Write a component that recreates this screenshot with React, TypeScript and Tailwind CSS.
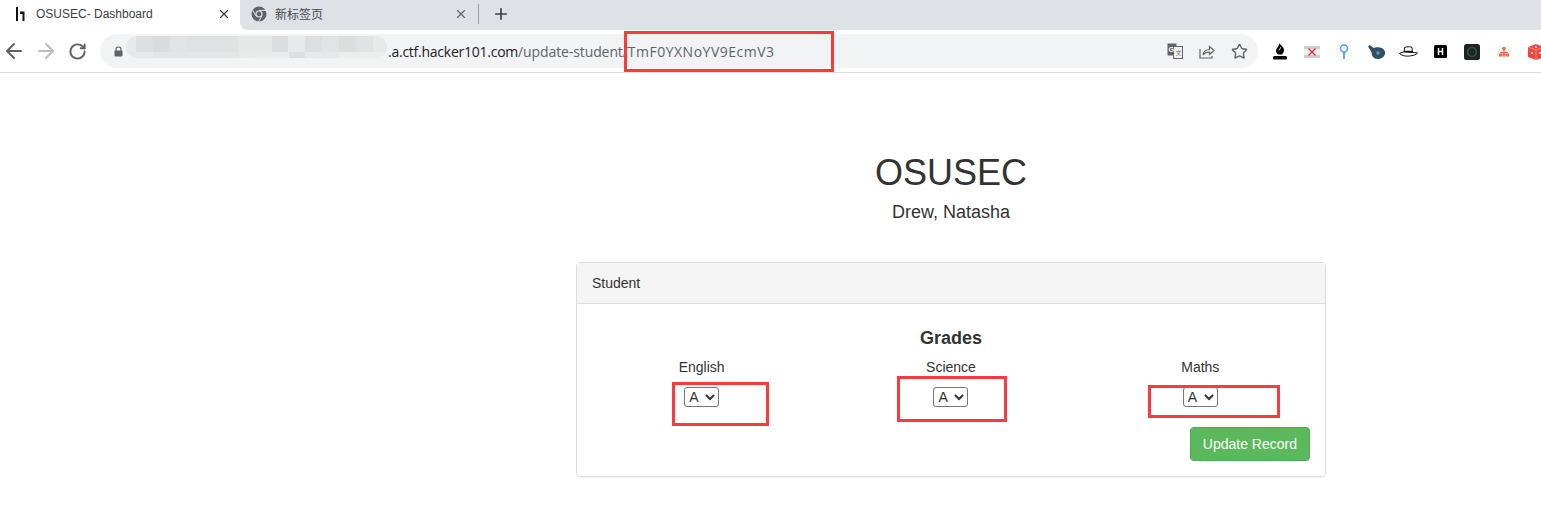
import React from 'react';
import { ArrowLeft, ArrowRight, RotateCw, X, Plus, Star } from 'lucide-react';

const font = "font-['Liberation_Sans',Arial,sans-serif]";
const chromeFont = "font-['Open_Sans',sans-serif]";

// pixelated redaction over the start of the url
const mosaicTop = [
  'w-[10px] bg-[#e8eaea]',
  'w-[17px] bg-[#dcdfe1]',
  'w-[17px] bg-[#d8dcdc]',
  'w-[17px] bg-[#e0e4e6]',
  'w-[35px] bg-[#dfe1e2]',
  'w-[16px] bg-[#dfe2df]',
  'w-[34px] bg-[#e6e8e8]',
  'w-[16px] bg-[#d9dde0]',
  'w-[17px] bg-[#e8e9ea]',
  'w-[17px] bg-[#dcdfe0]',
  'w-[17px] bg-[#e2e3e4]',
  'w-[17px] bg-[#dbdedd]',
  'w-[17px] bg-[#e0e2e3]',
  'w-[14px] bg-[#e8eaea]',
];

const mosaicBottom = [
  'w-[27px] bg-[#e6e9e9]',
  'w-[34px] bg-[#e2e5e5]',
  'w-[52px] bg-[#e4e6e7]',
  'w-[16px] bg-[#e8e9e9]',
  'w-[34px] bg-[#eaebeb]',
  'w-[16px] bg-[#dde0e3]',
  'w-[34px] bg-[#e7e8e9]',
  'w-[48px] bg-[#eceeee]',
];

const ChromeLogo = () => (
  <svg width="16" height="16" viewBox="0 0 16 16">
    <circle cx="8" cy="8" r="7.5" fill="#5f6368" />
    <circle cx="8" cy="8" r="3.6" fill="#dee1e6" />
    <circle cx="8" cy="8" r="2.4" fill="#5f6368" />
    <path d="M8 4.4h7M5 10l-3.5-6M10.8 10l-3.5 6" stroke="#dee1e6" strokeWidth="1" />
  </svg>
);

const HackerOneLogo = () => (
  <svg width="9" height="14" viewBox="0 0 9 14">
    <rect x="0" y="0" width="2" height="14" fill="#111" />
    <path d="M4 4.500h4.500V14h-2V7H4z" fill="#111" />
  </svg>
);

const LockIcon = () => (
  <svg width="9" height="11" viewBox="0 0 9 11">
    <path d="M2 5V3.200C2 1.800 3 1 4.500 1S7 1.800 7 3.200V5" fill="none" stroke="#5f6368" strokeWidth="1.200" />
    <rect x="0.500" y="4.500" width="8" height="6" rx="1" fill="#5f6368" />
  </svg>
);

const TranslateIcon = () => (
  <svg width="16" height="16" viewBox="0 0 16 16">
    <rect x="0.5" y="0.500" width="9" height="12" fill="#5f6368" />
    <rect x="6.500" y="3.500" width="9" height="12" fill="#f1f3f4" stroke="#5f6368" />
    <text x="1.500" y="9" fontSize="7" fontWeight="700" fill="#fff" fontFamily="Liberation Sans">G</text>
    <text x="8.500" y="12" fontSize="6" fill="#5f6368" fontFamily="Noto Sans CJK SC">文</text>
  </svg>
);

const ShareIcon = () => (
  <svg width="16" height="15" viewBox="0 0 16 15" fill="none" stroke="#5f6368" strokeWidth="1.200">
    <path d="M1 5v9h12v-2" />
    <path d="M4 11c.5-3.500 3-5.500 6.500-5.500V2.500L15 6.500l-4.500 4V8C8 8 5.500 9 4 11z" />
  </svg>
);

const extensions = [
  <svg key="bishop" width="16" height="17" viewBox="0 0 16 17">
    <path d="M7.500 0c.5 2 4.500 3.500 4.500 7 0 2-1 3-2 4.500H6C4.500 10 4 9 4 7.500 4 5.500 7 3.500 7.500 0z" fill="#000" />
    <path d="M9 4L7 7.500" stroke="#fff" strokeWidth="0.800" />
    <rect x="1" y="13" width="14" height="3.500" rx="1.500" fill="#000" />
  </svg>,
  <svg key="cross" width="16" height="12" viewBox="0 0 16 12">
    <rect width="16" height="12" fill="#cfcfcf" />
    <rect y="3" width="16" height="6" fill="#eeeeee" />
    <path d="M4.500 2.500l7 7M11.500 2.500l-7 7" stroke="#ee2244" strokeWidth="1.300" />
  </svg>,
  <svg key="pin" width="10" height="15" viewBox="0 0 10 15">
    <circle cx="5" cy="4.500" r="3.500" fill="none" stroke="#4f9ff5" strokeWidth="1.500" />
    <path d="M5 8v7" stroke="#4f9ff5" strokeWidth="1.800" />
  </svg>,
  <svg key="teapot" width="17" height="14" viewBox="0 0 17 14">
    <path d="M0 1.500 2 0l3.500 3c3-1.500 10.500-1 11.500 4 .5 4-3 7-7 7-4.500 0-6.500-3-6.500-7z" fill="#2c5068" />
    <circle cx="10" cy="8" r="1.800" fill="#6f8da0" />
  </svg>,
  <svg key="hat" width="19" height="12" viewBox="0 0 19 12">
    <path d="M5.500 1.500c2-1 6.500-1 7.500 0l.5 6h-8.500z" fill="#fff" stroke="#111" />
    <path d="M5 5.500h8.500" stroke="#111" strokeWidth="1.400" />
    <path d="M.5 7.500c2-1 3.500-1.500 5-1.500l8 .5c1.500 0 3 0 5 .5-2 3-14 5-18 .5z" fill="#fff" stroke="#111" />
  </svg>,
  <svg key="h" width="13" height="13" viewBox="0 0 13 13">
    <rect width="13" height="13" rx="1.500" fill="#000" />
    <path d="M4.500 3v7M8.500 3v7M4.500 6.500h4" stroke="#fff" strokeWidth="1.500" />
  </svg>,
  <svg key="ring" width="16" height="16" viewBox="0 0 16 16">
    <rect width="16" height="16" rx="2.500" fill="#1f2423" />
    <circle cx="8" cy="8" r="4.300" fill="none" stroke="#2f5f50" strokeWidth="1.300" />
  </svg>,
  <svg key="tree" width="14" height="14" viewBox="0 0 14 14">
    <rect width="14" height="14" rx="1.500" fill="#f7f7f7" />
    <g fill="#f2693c">
      <circle cx="7" cy="3.500" r="1.800" />
      <rect x="6.300" y="4" width="1.400" height="5" />
      <rect x="3" y="7" width="8" height="1.200" />
      <rect x="2" y="8.500" width="3" height="3" />
      <rect x="5.500" y="8.500" width="3" height="3" />
      <rect x="9" y="8.500" width="3" height="3" />
    </g>
  </svg>,
  <svg key="dice" width="16" height="16" viewBox="0 0 16 16">
    <path d="M8 0l8 3v10l-8 3-8-3V3z" fill="#f2473f" />
    <path d="M0 3l8 3 8-3M8 6v10" stroke="#ffb3ad" strokeWidth="0.600" fill="none" />
    <circle cx="4" cy="9" r="1" fill="#fff" />
    <circle cx="12" cy="9" r="1" fill="#fff" />
    <circle cx="8" cy="3" r="1" fill="#fff" />
  </svg>,
];

const Grade = ({ label }: { label: string }) => (
  <div className="flex flex-col items-center">
    <span className="text-[14px] leading-[20px] text-[#333]">{label}</span>
    <select defaultValue="A" className="mt-[10px] h-[20px] w-[35px] appearance-auto rounded-[3px] border border-[#767676] bg-white text-[14px] text-[#333]">
      <option>A</option>
      <option>B</option>
      <option>C</option>
    </select>
  </div>
);

const Highlight = ({ className }: { className: string }) => (
  <div className={`pointer-events-none absolute border-[3px] border-[#fb3a3a] ${className}`} />
);

export default function App() {
  return (
    <div className={`relative h-[505px] w-[1541px] overflow-hidden bg-white ${font}`}>
      {/* tab strip */}
      <div className="flex h-[30px] items-stretch text-[12px]">
        <div className={`flex w-[240px] items-center bg-white pb-[3px] pl-[16px] pr-[9px] text-[#3c4043] ${font}`}>
          <HackerOneLogo />
          <span className="ml-[11px] flex-1">OSUSEC- Dashboard</span>
          <X size={14} strokeWidth={2} color="#3c4043" />
        </div>
        <div className="flex flex-1 items-center rounded-bl-lg bg-[#dee1e6] pb-[3px]">
          <div className="flex w-[238px] items-center pl-[11px] pr-[10px] text-[#45494d]">
            <ChromeLogo />
            <span className="ml-[8px] flex-1 font-['Noto_Sans_CJK_SC',sans-serif]">新标签页</span>
            <X size={14} strokeWidth={2} color="#5f6368" />
          </div>
          <div className="h-[20px] w-px bg-[#9aa0a6]" />
          <Plus size={18} strokeWidth={2.2} color="#3c4043" className="ml-[13px]" />
        </div>
      </div>

      {/* toolbar */}
      <div className="flex h-[43px] items-center border-b border-[#dadce0] bg-white">
        <div className="flex w-[100px] items-center gap-[8px] pl-[2px]">
          <ArrowLeft size={24} color="#5f6368" strokeWidth={2} />
          <ArrowRight size={24} color="#babcbe" strokeWidth={2} />
          <RotateCw size={19} color="#5f6368" strokeWidth={2.500} className="ml-[2px]" />
        </div>
        <div className="relative flex h-[34px] w-[1158px] items-center rounded-full bg-[#f1f3f4] pl-[14px] pr-[10px]">
          <LockIcon />
          <span className={`ml-[265px] flex-1 text-[14px] text-[#5f6368] ${chromeFont}`}>
            <span className="tracking-[-0.25px] text-[#202124]">.a.ctf.hacker101.com</span>
            <span className="tracking-[-0.1px]">/update-student/</span>
            <span className="tracking-[0.5px]">TmF0YXNoYV9EcmV3</span>
          </span>
          <div className="flex items-center gap-[16px]">
            <TranslateIcon />
            <ShareIcon />
            <Star size={17} color="#5f6368" strokeWidth={2} />
          </div>
        </div>
        <div className="ml-[12px] flex flex-1 items-center gap-[12px] overflow-hidden pt-[1px]">
          {extensions.map((icon, i) => (
            <div key={i} className="flex h-[20px] w-[20px] shrink-0 items-center justify-center">
              {icon}
            </div>
          ))}
        </div>
      </div>

      {/* page */}
      <div className="ml-[576px] w-[750px] text-[#333]">
        <h1 className="mt-[78px] text-center text-[36px] leading-[44px]">OSUSEC</h1>
        <h4 className="mt-[7px] text-center text-[18px] leading-[20px]">Drew, Natasha</h4>
        <div className="mt-[40px] h-[215px] rounded-[4px] border border-[#dddddd] shadow-[0_1px_1px_rgba(0,0,0,0.05)]">
          <div className="flex h-[41px] items-center border-b border-[#dddddd] bg-[#f5f5f5] px-[15px] text-[14px]">Student</div>
          <div className="pt-[24px]">
            <h4 className="text-center text-[18px] font-bold leading-[20px]">Grades</h4>
            <div className="mt-[9px] grid grid-cols-3">
              <Grade label="English" />
              <Grade label="Science" />
              <Grade label="Maths" />
            </div>
            <div className="mt-[20px] flex justify-end pr-[15px]">
              <button className="h-[34px] rounded-[4px] border border-[#4cae4c] bg-[#5cb85c] px-[12px] text-[14px] text-white">Update Record</button>
            </div>
          </div>
        </div>
      </div>

      {/* screenshot redaction */}
      <div className="absolute left-[126px] top-[36px] flex h-[22px] w-[261px] flex-col overflow-hidden rounded-full blur-[0.5px]">
        <div className="flex h-[16px]">
          {mosaicTop.map((c, i) => (
            <div key={i} className={`h-full shrink-0 ${c}`} />
          ))}
        </div>
        <div className="flex h-[6px]">
          {mosaicBottom.map((c, i) => (
            <div key={i} className={`h-full shrink-0 ${c}`} />
          ))}
        </div>
      </div>

      {/* annotation boxes */}
      <Highlight className="left-[624px] top-[31px] h-[41px] w-[210px]" />
      <Highlight className="left-[672px] top-[382px] h-[44px] w-[97px]" />
      <Highlight className="left-[897px] top-[376px] h-[46px] w-[110px]" />
      <Highlight className="left-[1148px] top-[385px] h-[33px] w-[132px]" />
    </div>
  );
}
